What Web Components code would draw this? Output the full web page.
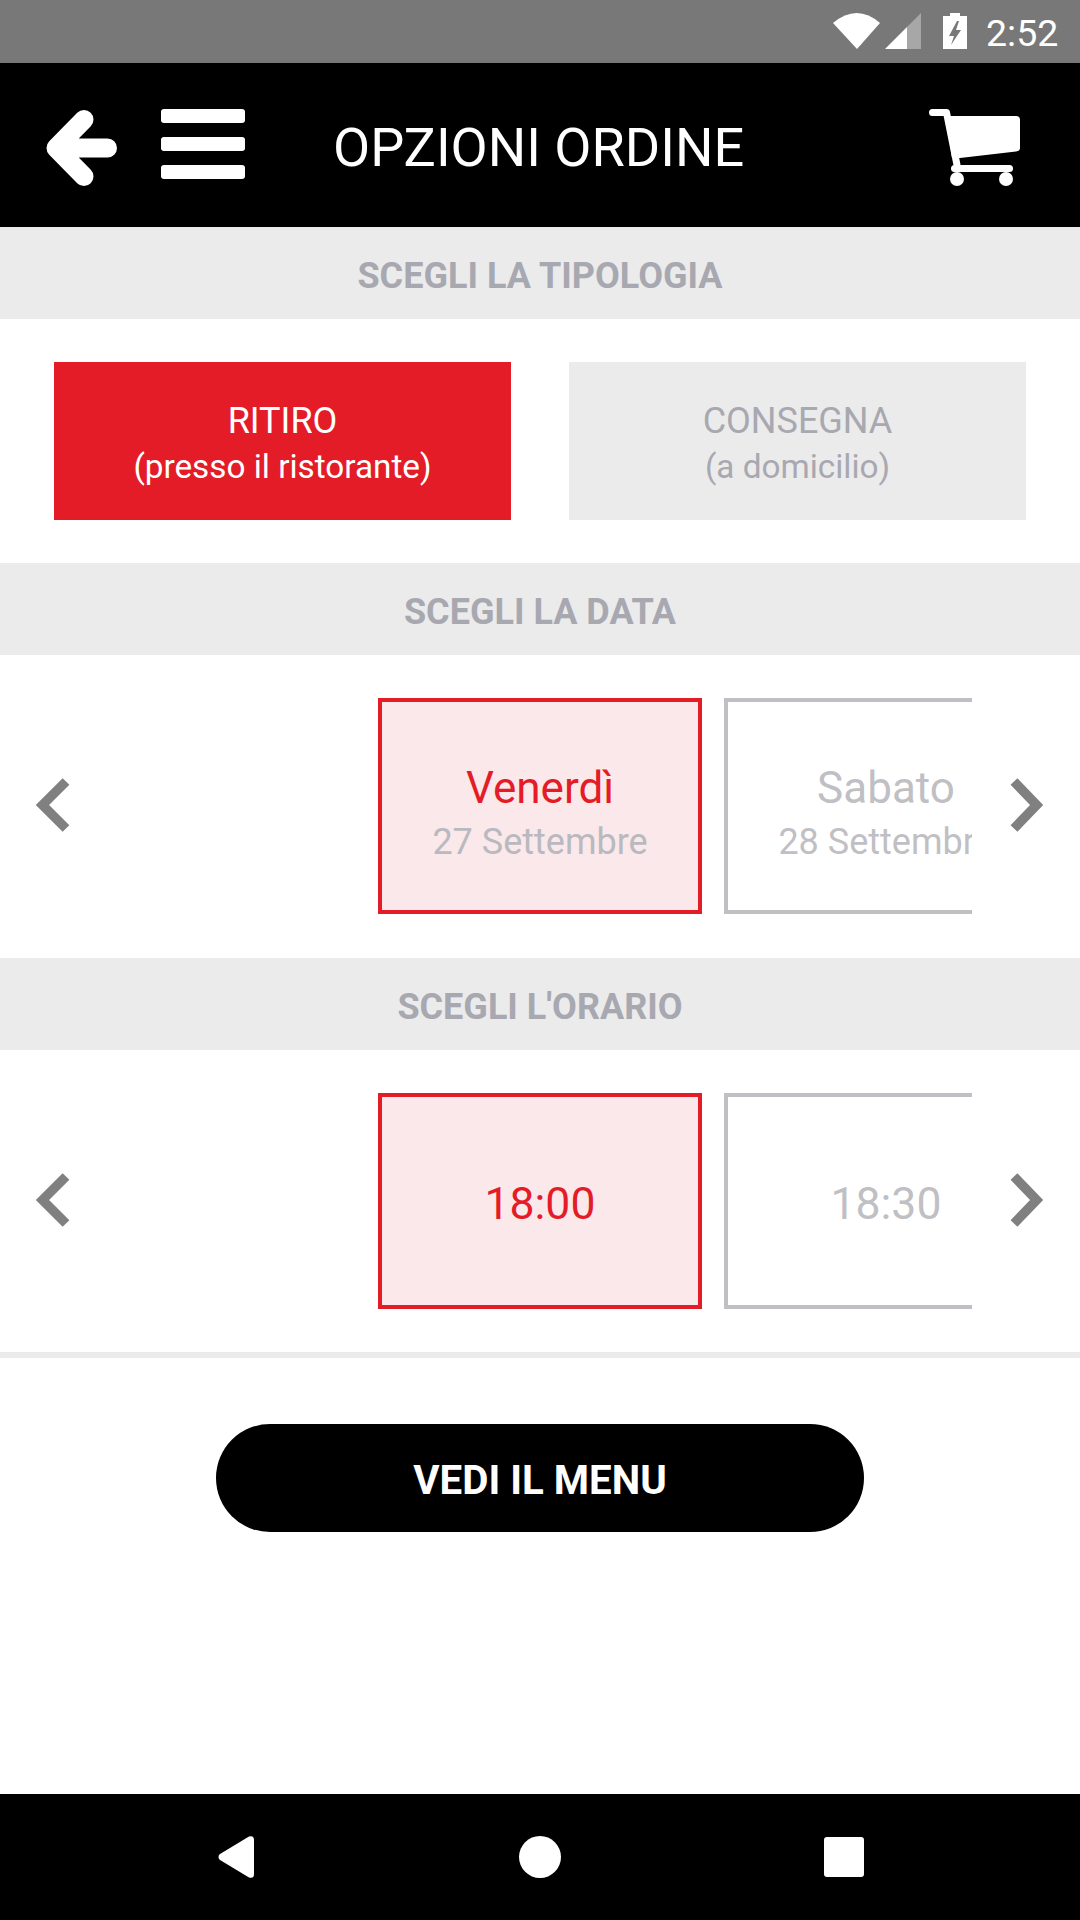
<!DOCTYPE html>
<html lang="it"><head><meta charset="utf-8"><title>Opzioni ordine</title>
<style>
html,body{margin:0;padding:0;background:#fff}
body{width:1080px;height:1920px;font-family:Roboto,"Liberation Sans",sans-serif;display:flex;flex-direction:column;overflow:hidden}
</style></head><body>
<status-bar></status-bar>
<app-header title="OPZIONI ORDINE"></app-header>
<main-view></main-view>
<nav-bar></nav-bar>
<script>
function def(name,html){customElements.define(name,class extends HTMLElement{
  connectedCallback(){if(this.shadowRoot)return;const r=this.attachShadow({mode:'open'});r.innerHTML=typeof html==='function'?html(this):html;}
});}
def('status-bar',`<style>
:host{display:flex;height:63px;background:#787878;color:#fff;font:400 37.500px Roboto,sans-serif;align-items:center;flex:none}
svg{display:block;margin-left:833px;flex:none}
span{margin-left:19px;margin-top:3px;white-space:nowrap}
</style>
<svg width="134" height="63" viewBox="833 0 134 63">
<path fill="#fff" d="M833 23Q857 3 880 23L857 49Z"/>
<path fill="#fff" d="M885 49L907 27V49Z"/><path fill="#fff" opacity=".35" d="M907 27L921 13V49H907Z"/>
<path fill="#fff" fill-rule="evenodd" d="M943 16H950V13H960V16H967V49H943ZM957 21L949 36H954L951 45 961 30H956L959 21Z"/>
</svg><span>2:52</span>`);
def('app-header',h=>`<style>
:host{display:flex;height:164px;background:#000;align-items:center;flex:none;color:#fff}
.t{font:400 54px Roboto,sans-serif;margin-left:88px;margin-top:4px;white-space:nowrap}
.back{margin-left:46px;margin-top:6px;display:block}
.menu{margin-left:44px;margin-top:-2px;display:flex;flex-direction:column;gap:14px;width:84px}
.menu i{display:block;height:14px;background:#fff;border-radius:3px}
.cart{margin-left:auto;margin-right:58px;margin-top:6px;display:block}
</style>
<svg class="back" width="71" height="76" viewBox="46 110 71 76"><path d="M84 119.500L56 148L84 176.500M56 148H107.500" fill="none" stroke="#fff" stroke-width="19" stroke-linecap="round" stroke-linejoin="round"/></svg>
<div class="menu"><i></i><i></i><i></i></div>
<span class="t">${h.getAttribute('title')}</span>
<svg class="cart" width="93" height="78" viewBox="49 29 93 78" fill="#fff">
<path d="M52.500 32.500H66.500L77 85M74.500 88.500H129.500" fill="none" stroke="#fff" stroke-width="7" stroke-linecap="round" stroke-linejoin="round"/>
<path d="M66 36H136Q140 36 140 40V68Q140 71 136 71.500L80 78H72Z"/>
<circle cx="77" cy="99" r="7"/><circle cx="126" cy="99" r="7"/></svg>`);
def('section-title',`<style>
:host{display:flex;box-sizing:border-box;height:92px;padding-top:5px;background:#ebebec;color:#a8a8b0;font:700 36px Roboto,sans-serif;align-items:center;justify-content:center;flex:none}
</style><slot></slot>`);
def('type-button',`<style>
:host{display:flex;flex-direction:column;box-sizing:border-box;padding-top:6px;height:158px;width:457px;align-items:center;justify-content:center;background:#ebebec;color:#a8a8b0;font:400 33.300px/46px Roboto,sans-serif;text-align:center}
:host([active]){background:#e41c28;color:#fff}
::slotted(strong){font-weight:400;font-size:36px}
</style><slot></slot>`);
def('pick-card',`<style>
:host{display:flex;flex-direction:column;flex:0 0 324px;box-sizing:border-box;height:216px;border:4px solid #bfbfc4;color:#bfbfc4;align-items:center;justify-content:center;text-align:center;white-space:nowrap;font:400 36px/52px Roboto,sans-serif}
:host([active]){border-color:#e41c28;background:#fbe8ea}
::slotted(b){font-weight:400;font-size:44px;line-height:56px;margin-top:15px}
:host([active]) ::slotted(b){color:#e41c28}
:host([active]) ::slotted(em){color:#b9b9c0}
::slotted(em){font-style:normal}
::slotted(u){text-decoration:none;font-size:44.500px;margin-top:6px}
:host([active]) ::slotted(u){color:#e41c28}
</style><slot></slot>`);
def('pick-row',`<style>
:host{display:flex;align-items:center;padding:43px 0;flex:none}
svg{flex:none;display:block}
.track{display:flex;gap:22px;width:864px;box-sizing:border-box;padding-left:270px;overflow:hidden;flex:none}
</style>
<svg width="108" height="216" viewBox="0 0 108 216"><path d="M66 83.500L42.500 107L66 130.500" fill="none" stroke="#808080" stroke-width="9.500"/></svg>
<div class="track"><slot></slot></div>
<svg width="108" height="216" viewBox="0 0 108 216"><path d="M42 83.500L64.600 107L42 130.500" fill="none" stroke="#808080" stroke-width="9.500"/></svg>`);
def('pill-button',`<style>
:host{display:flex;box-sizing:border-box;padding-top:4px;width:648px;height:108px;border-radius:54px;background:#000;color:#fff;font:700 40.300px Roboto,sans-serif;align-items:center;justify-content:center}
</style><slot></slot>`);
def('main-view',`<style>
:host{display:flex;flex-direction:column;flex:1;min-height:0;background:#fff}
.types{display:flex;justify-content:space-between;padding:43px 54px;flex:none}
.rule{height:6px;background:#ebebec;flex:none}
.cta{display:flex;justify-content:center;padding-top:66px}
.date{margin-bottom:1px}
</style>
<section-title>SCEGLI LA TIPOLOGIA</section-title>
<div class="types">
<type-button active><strong>RITIRO</strong><span>(presso il ristorante)</span></type-button>
<type-button><strong>CONSEGNA</strong><span>(a domicilio)</span></type-button>
</div>
<section-title>SCEGLI LA DATA</section-title>
<pick-row class="date">
<pick-card active><b>Venerdì</b><em>27 Settembre</em></pick-card>
<pick-card><b>Sabato</b><em>28 Settembre</em></pick-card>
</pick-row>
<section-title>SCEGLI L'ORARIO</section-title>
<pick-row>
<pick-card active><u>18:00</u></pick-card>
<pick-card><u>18:30</u></pick-card>
</pick-row>
<div class="rule"></div>
<div class="cta"><pill-button>VEDI IL MENU</pill-button></div>`);
def('nav-bar',`<style>
:host{display:block;height:126px;background:#000;flex:none}
svg{display:block}
</style>
<svg width="1080" height="126" viewBox="0 1794 1080 126" fill="#fff">
<path d="M218.500 1857Q218.500 1855 220 1854L249 1836.500Q254 1835 254 1840V1874Q254 1879 249 1877.500L220 1860Q218.500 1859 218.500 1857Z"/>
<circle cx="540" cy="1857" r="21"/>
<rect x="824" y="1837" width="40" height="40" rx="3"/></svg>`);
</script>
</body></html>
